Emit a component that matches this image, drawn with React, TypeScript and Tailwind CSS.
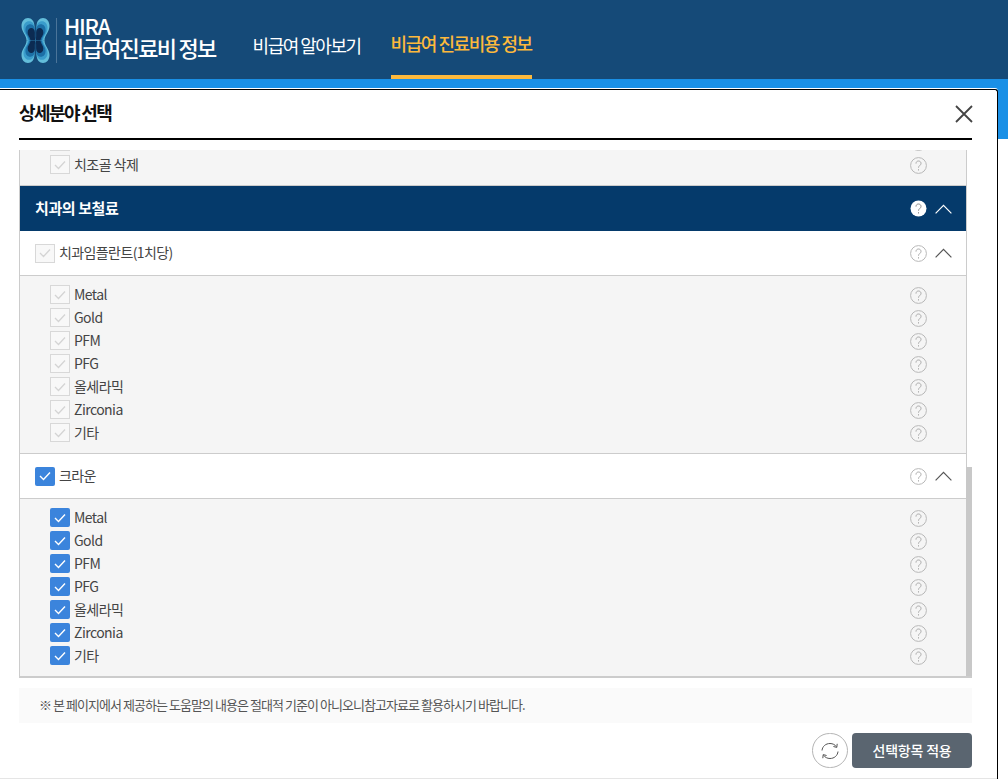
import React from "react";

const font = { fontFamily: '"Noto Sans CJK KR", "Noto Sans", sans-serif' };

function Help({ inverse = false }: { inverse?: boolean }) {
  if (inverse) {
    return (
      <svg width="17" height="17" viewBox="0 0 17 17" className="shrink-0">
        <circle cx="8.5" cy="8.5" r="8" fill="#fff" />
        <path d="M6 6.6C6 5 7.1 4 8.5 4S11 5 11 6.4c0 2-2.5 2.2-2.5 4.3M8.5 12.2v1.3" fill="none" stroke="#888" strokeWidth="1" />
      </svg>
    );
  }
  return (
    <svg width="17" height="17" viewBox="0 0 17 17" className="shrink-0">
      <circle cx="8.5" cy="8.5" r="7.9" fill="none" stroke="#b8b8b8" strokeWidth="1" />
      <path d="M6 6.6C6 5 7.1 4 8.5 4S11 5 11 6.4c0 2-2.5 2.2-2.5 4.3M8.5 12.2v1.3" fill="none" stroke="#a8a8a8" strokeWidth="1" />
    </svg>
  );
}

function Chevron({ color }: { color: string }) {
  return (
    <svg width="17" height="10" viewBox="0 0 17 10" className="shrink-0">
      <path d="M0.6 9.4 8.5 1.4l7.9 8" fill="none" stroke={color} strokeWidth="1.2" />
    </svg>
  );
}

function Check({ on }: { on: boolean }) {
  return on ? (
    <span className="flex h-[19px] w-[20px] shrink-0 items-center justify-center rounded-[2px] bg-[#3b84dc]">
      <svg width="12" height="10" viewBox="0 0 12 10">
        <path d="M1 5 4.5 8.5 11 1.5" fill="none" stroke="#fff" strokeWidth="1.4" />
      </svg>
    </span>
  ) : (
    <span className="flex h-[19px] w-[20px] shrink-0 items-center justify-center border border-[#d8d8d8] bg-[#f8f8f8]">
      <svg width="12" height="10" viewBox="0 0 12 10">
        <path d="M1 5 4.5 8.5 11 1.5" fill="none" stroke="#d4d4d4" strokeWidth="1.3" />
      </svg>
    </span>
  );
}

function Item({ label, on }: { label: string; on: boolean }) {
  return (
    <div className="flex h-[23px] items-center pl-[30px] pr-[39px]">
      <Check on={on} />
      <span className="ml-[4px] flex-1 text-[14px] leading-[19px] tracking-[-0.55px] text-[#444]">{label}</span>
      <span className="mt-[2px] flex">
        <Help />
      </span>
    </div>
  );
}

function Group({ title, on, items }: { title: string; on: boolean; items: string[] }) {
  return (
    <>
      <div className="flex h-[45px] items-center border-b border-[#cccccc] bg-white pl-[15px] pr-[14px]">
        <Check on={on} />
        <span className="ml-[4px] flex-1 pb-[2px] text-[14px] tracking-[-0.6px] text-[#444]">{title}</span>
        <Help />
        <span className="ml-[8px]">
          <Chevron color="#555" />
        </span>
      </div>
      <div className="border-b border-[#cccccc] bg-[#f5f5f5] pb-[9px] pt-[7px]">
        {items.map((t) => (
          <Item key={t} label={t} on={on} />
        ))}
      </div>
    </>
  );
}

function Lobe({ t }: { t: string }) {
  const d = "M14.5 22.5H5.5C5.5 17 0.5 14 0.5 8C0.5 3 3.5 0 7 0C10.5 0 13.4 3 13.4 8C13.4 13 13 18 14.5 22.5Z";
  const layers: [number, string][] = [
    [1, "#63bdda"],
    [0.86, "#3a9ccb"],
    [0.72, "#1c6fa6"],
    [0.56, "#0c2b52"],
  ];
  return (
    <g transform={t}>
      {layers.map(([s, c]) => (
        <path key={c} d={d} fill={c} transform={`translate(14.5 22.5) scale(${s}) translate(-14.5 -22.5)`} />
      ))}
    </g>
  );
}

function Logo() {
  return (
    <svg width="29" height="45" viewBox="0 0 29 45" className="shrink-0">
      <Lobe t="" />
      <Lobe t="matrix(-1 0 0 1 29 0)" />
      <Lobe t="matrix(1 0 0 -1 0 45)" />
      <Lobe t="matrix(-1 0 0 -1 29 45)" />
    </svg>
  );
}

const items = ["Metal", "Gold", "PFM", "PFG", "올세라믹", "Zirconia", "기타"];

export default function App() {
  return (
    <div className="relative h-[779px] w-[1008px] overflow-hidden bg-white" style={font}>
      <header className="flex h-[79px] items-stretch bg-[#154a78] pl-[21px]">
        <div className="flex items-center pt-[1px]">
          <Logo />
          <div className="ml-[6px] h-[45px] w-px bg-[#4b7499]" />
          <div className="mb-[7px] ml-[7px] flex flex-col text-white">
            <span className="text-[22px] font-medium leading-[21px] tracking-[-1.3px]">HIRA</span>
            <span className="text-[22px] font-medium leading-[22px] tracking-[-1.7px]">비급여진료비 정보</span>
          </div>
        </div>
        <nav className="ml-[37px] flex items-stretch gap-[30px]">
          <a className="flex items-center pt-[12px] text-[18px] tracking-[-1.5px] text-white">비급여 알아보기</a>
          <a className="flex items-center border-b-[4px] border-[#fdb93c] pt-[12px] text-[18px] font-medium tracking-[-1.45px] text-[#fdb93c]">비급여 진료비용 정보</a>
        </nav>
      </header>
      <div className="h-[60px] bg-[#1a90e6]" />

      <div className="absolute left-0 top-[88px] flex h-[691px] w-[998px] flex-col rounded-tr-[3px] border-t border-white">
        <div className="flex h-full flex-col rounded-tr-[3px] border-r border-t border-r-black border-t-black bg-white">
          <div className="ml-[19px] mr-[25px] flex h-[50px] shrink-0 items-center justify-between border-b-2 border-black pb-[4px]">
            <h2 className="text-[18px] font-bold tracking-[-1.6px] text-[#111]">상세분야 선택</h2>
            <svg width="18" height="18" viewBox="0 0 18 18" className="-mr-px mt-[4px]">
              <path d="M1 1l16 16M17 1 1 17" stroke="#444" strokeWidth="1.8" fill="none" />
            </svg>
          </div>

          <div className="relative ml-[19px] mr-[25px] mt-[10px] h-[528px] shrink-0 overflow-hidden border-b-2 border-[#cccccc]">
            <div className="mr-[5px] h-full overflow-hidden border-l border-r border-[#cccccc]">
              <div className="-mt-[20px]">
                <div className="border-b border-[#cccccc] bg-[#f5f5f5] pb-[9px]">
                  <div className="-mt-[12px] overflow-hidden">
                    <Item label="" on={false} />
                  </div>
                  <Item label="치조골 삭제" on={false} />
                </div>
                <div className="flex h-[45px] items-center bg-[#053a6b] pl-[15px] pr-[14px]">
                  <span className="flex-1 text-[15px] font-bold tracking-[-0.4px] text-white">치과의 보철료</span>
                  <Help inverse />
                  <span className="ml-[8px]">
                    <Chevron color="#fff" />
                  </span>
                </div>
                <Group title="치과임플란트(1치당)" on={false} items={items} />
                <Group title="크라운" on={true} items={items} />
              </div>
            </div>
            <div className="absolute right-0 top-[317px] h-[209px] w-[6px] bg-[#c8c8c8]" />
          </div>

          <div className="ml-[19px] mr-[25px] mt-[10px] flex h-[35px] shrink-0 items-center bg-[#fafafa] pl-[20px] pb-[2px] text-[13px] tracking-[-0.95px] text-[#555]">
            ※ 본 페이지에서 제공하는 도움말의 내용은 절대적 기준이 아니오니참고자료로 활용하시기 바랍니다.
          </div>

          <div className="mr-[25px] mt-[10px] flex shrink-0 justify-end gap-[4px]">
            <button className="flex h-[35px] w-[36px] items-center justify-center rounded-full border border-[#b5b5b5] bg-white">
              <svg width="22" height="20" viewBox="0 0 22 20">
                <path d="M3 9.5C3.4 5.3 6.8 2.5 11 2.5c2.7 0 5 1.2 6.4 3.2M19 10.5c-.4 4.2-3.8 7-8 7-2.7 0-5-1.2-6.4-3.2" fill="none" stroke="#555" strokeWidth="1" />
                <path d="M18.2 2.8l-.4 3.6-3.4-.9M3.8 17.2l.4-3.6 3.4.9" fill="none" stroke="#555" strokeWidth="1" />
              </svg>
            </button>
            <button className="flex h-[35px] w-[120px] items-center justify-center rounded-[4px] bg-[#5a6570] text-[14px] font-medium tracking-[-0.2px] text-white">
              선택항목 적용
            </button>
          </div>
          <div className="flex-1" />
          <div className="h-px shrink-0 bg-[#e5e5e5]" />
        </div>
      </div>
    </div>
  );
}
